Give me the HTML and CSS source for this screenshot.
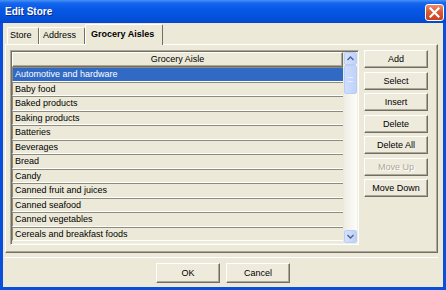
FILE: index.html
```html
<!DOCTYPE html>
<html>
<head>
<meta charset="utf-8">
<title>Edit Store</title>
<link rel="stylesheet" href="styles.css">
</head>
<body>
<div class="window">
  <div class="titlebar">
    <span class="title">Edit Store</span>
    <span class="close"><svg width="11" height="11" viewBox="0 0 11 11"><path d="M1.5 1.5 L9.5 9.5 M9.5 1.5 L1.5 9.5" stroke="#fff" stroke-width="2.2" stroke-linecap="square"/></svg></span>
  </div>
  <div class="client">
    <div class="tabs">
      <div class="tab tab-store">Store</div>
      <div class="tab tab-address">Address</div>
      <div class="tab tab-active">Grocery Aisles</div>
    </div>
    <div class="panel">
      <div class="listbox">
        <div class="list">
          <div class="list-header">Grocery Aisle</div>
          <div class="row selected">Automotive and hardware</div>
          <div class="row">Baby food</div>
          <div class="row">Baked products</div>
          <div class="row">Baking products</div>
          <div class="row">Batteries</div>
          <div class="row">Beverages</div>
          <div class="row">Bread</div>
          <div class="row">Candy</div>
          <div class="row">Canned fruit and juices</div>
          <div class="row">Canned seafood</div>
          <div class="row">Canned vegetables</div>
          <div class="row">Cereals and breakfast foods</div>
        </div>
        <div class="scrollbar">
          <div class="sb-btn"><svg width="7" height="5" viewBox="0 0 7 5"><path d="M0.5 4 L3.5 1 L6.5 4" fill="none" stroke="#4D6185" stroke-width="1.3"/></svg></div>
          <div class="sb-thumb"><span class="grip"></span></div>
          <div class="sb-track"></div>
          <div class="sb-btn"><svg width="7" height="5" viewBox="0 0 7 5"><path d="M0.5 1 L3.5 4 L6.5 1" fill="none" stroke="#4D6185" stroke-width="1.3"/></svg></div>
        </div>
      </div>
      <div class="side">
        <button class="btn">Add</button>
        <button class="btn">Select</button>
        <button class="btn">Insert</button>
        <button class="btn">Delete</button>
        <button class="btn">Delete All</button>
        <button class="btn disabled">Move Up</button>
        <button class="btn">Move Down</button>
      </div>
    </div>
    <div class="separator"></div>
    <div class="footer">
      <button class="btn btn-footer">OK</button>
      <button class="btn btn-footer">Cancel</button>
    </div>
  </div>
</div>
</body>
</html>
```

FILE: styles.css
```css
html, body {
  margin: 0;
  padding: 0;
}

body {
  width: 446px;
  height: 290px;
  overflow: hidden;
  font-family: "Liberation Sans", Arial, sans-serif;
  font-size: 9px;
  color: #000;
}

.window {
  width: 446px;
  height: 290px;
  display: flex;
  flex-direction: column;
  background: #0A4FDB;
}

.titlebar {
  height: 23px;
  flex: none;
  display: flex;
  align-items: center;
  box-sizing: border-box;
  padding: 0 2px 0 5px;
  background: linear-gradient(to bottom, #4A93F5 0px, #1467EE 3px, #0858E6 9px, #0453DD 16px, #0348CF 23px);
}

.title {
  flex: 1;
  font-weight: bold;
  font-size: 10px;
  color: #fff;
  text-shadow: 1px 1px 0 #0C2C90;
}

.close {
  width: 19px;
  height: 17px;
  box-sizing: border-box;
  border: 1px solid #fff;
  border-radius: 3px;
  background: linear-gradient(to bottom, #EC8E6B, #DA5A34 45%, #C8421E);
  display: flex;
  align-items: center;
  justify-content: center;
  margin-top: 1px;
}

.client {
  flex: 1;
  margin: 0 3px 3px 3px;
  padding-top: 1px;
  background: #ECE9D8;
  display: flex;
  flex-direction: column;
}

/* tabs */
.tabs {
  height: 20px;
  margin-left: 4px;
  display: flex;
  align-items: flex-end;
}

.tab {
  height: 17px;
  box-sizing: border-box;
  border-top: 1px solid #fff;
  border-left: 1px solid #fff;
  border-right: 1px solid #716F64;
  border-radius: 2px 2px 0 0;
  line-height: 15px;
  background: #ECE9D8;
}

.tab-store {
  width: 32px;
  padding-left: 2px;
}

.tab-address {
  width: 46px;
  padding-left: 3px;
  border-left-color: #fff;
}

.tab-active {
  position: relative;
  z-index: 1;
  width: 78px;
  height: 21px;
  margin-bottom: -1px;
  padding-left: 5px;
  font-weight: bold;
  line-height: 18px;
}

/* panel */
.panel {
  width: 433px;
  height: 209px;
  margin-left: 2px;
  box-sizing: border-box;
  border-style: solid;
  border-width: 1px;
  border-color: #fff #716F64 #716F64 #fff;
  box-shadow: inset -1px -1px 0 #ACA899;
  padding: 5px 0 0 4px;
  display: flex;
  align-items: flex-start;
}

.listbox {
  width: 349px;
  height: 195px;
  box-sizing: border-box;
  border: 1px solid;
  border-color: #ACA899 #fff #fff #ACA899;
  box-shadow: inset 1px 1px 0 #716F64, inset -1px -1px 0 #F1EFE2;
  padding: 1px;
  display: flex;
  background: #ECE9D8;
}

.list {
  flex: 1;
  display: flex;
  flex-direction: column;
  padding-right: 1px;
}

.list-header {
  height: 15px;
  flex: none;
  box-sizing: border-box;
  border: 1px solid;
  border-color: #fff #716F64 #716F64 #fff;
  box-shadow: inset -1px -1px 0 #ACA899;
  text-align: center;
  line-height: 12px;
}

.row {
  height: 14.5px;
  flex: none;
  box-sizing: border-box;
  border-top: 1px solid #8D8B7F;
  border-left: 1px solid #8D8B7F;
  border-bottom: 1px solid #fff;
  padding-left: 2px;
  line-height: 12px;
  white-space: nowrap;
}

.row.selected {
  background: #316AC5;
  color: #fff;
}

/* scrollbar */
.scrollbar {
  width: 13px;
  flex: none;
  display: flex;
  flex-direction: column;
  background: linear-gradient(to right, #EEEDE5, #FDFDFA);
}

.sb-btn {
  height: 13px;
  flex: none;
  box-sizing: border-box;
  border: 1px solid #BACDF6;
  border-radius: 2px;
  background: linear-gradient(to right, #D6E2FD, #BFD1FB);
  display: flex;
  align-items: center;
  justify-content: center;
}

.sb-thumb {
  height: 29px;
  flex: none;
  box-sizing: border-box;
  border: 1px solid #BACDF6;
  border-radius: 2px;
  background: linear-gradient(to right, #CFDDFD, #C0D2FB);
  display: flex;
  align-items: center;
  justify-content: center;
}

.grip {
  width: 5px;
  height: 3px;
  border-top: 1px solid #E8EFFE;
  border-bottom: 1px solid #E8EFFE;
}

.sb-track {
  flex: 1;
}

/* buttons */
.side {
  margin-left: 5px;
  display: flex;
  flex-direction: column;
  gap: 3.5px;
}

.btn {
  width: 64px;
  height: 18px;
  box-sizing: border-box;
  margin: 0;
  padding: 0;
  font-family: "Liberation Sans", Arial, sans-serif;
  font-size: 9px;
  color: #000;
  background: #EEEBDD;
  border: 1px solid;
  border-color: #fff #716F64 #716F64 #fff;
  box-shadow: inset -1px -1px 0 #ACA899;
  text-align: center;
}

.btn.disabled {
  color: #ACA899;
  text-shadow: 1px 1px 0 #fff;
}

.separator {
  height: 1px;
  margin: 4px 5px 0 2px;
  background: #fff;
}

.footer {
  margin-top: 5px;
  display: flex;
  justify-content: center;
  gap: 6px;
}

.btn-footer {
  height: 20px;
}
```
